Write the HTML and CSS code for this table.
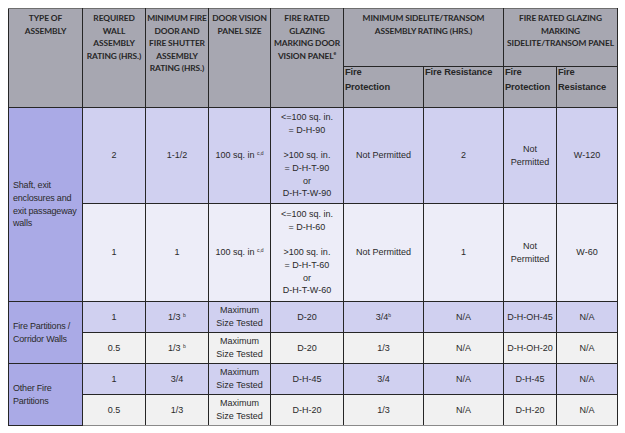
FILE: index.html
```html
<!DOCTYPE html>
<html>
<head>
<meta charset="utf-8">
<link rel="stylesheet" href="styles.css">
</head>
<body>
<table class="fire-table">
  <colgroup>
    <col class="c1"><col class="c2"><col class="c3"><col class="c4"><col class="c5"><col class="c6"><col class="c7"><col class="c8"><col class="c9">
  </colgroup>
  <thead>
    <tr class="h1">
      <th rowspan="2">TYPE OF<br>ASSEMBLY</th>
      <th rowspan="2">REQUIRED<br>WALL<br>ASSEMBLY<br>RATING (HRS.)</th>
      <th rowspan="2">MINIMUM FIRE<br>DOOR AND<br>FIRE SHUTTER<br>ASSEMBLY<br>RATING (HRS.)</th>
      <th rowspan="2">DOOR VISION<br>PANEL SIZE</th>
      <th rowspan="2">FIRE RATED<br>GLAZING<br>MARKING DOOR<br>VISION PANEL<sup>e</sup></th>
      <th colspan="2">MINIMUM SIDELITE/TRANSOM<br>ASSEMBLY RATING (HRS.)</th>
      <th colspan="2">FIRE RATED GLAZING<br>MARKING<br>SIDELITE/TRANSOM PANEL</th>
    </tr>
    <tr class="h2">
      <th class="sub"><span class="sub-t">Fire<br>Protection</span></th>
      <th class="sub"><span class="sub-t">Fire Resistance</span></th>
      <th class="sub"><span class="sub-t">Fire<br>Protection</span></th>
      <th class="sub"><span class="sub-t">Fire<br>Resistance</span></th>
    </tr>
  </thead>
  <tbody>
    <tr class="odd big">
      <td class="type" rowspan="2">Shaft, exit enclosures and exit passageway walls</td>
      <td>2</td>
      <td>1-1/2</td>
      <td>100 sq. in <sup>c,d</sup></td>
      <td>&lt;=100 sq. in.<br>= D-H-90<br><br>&gt;100 sq. in.<br>= D-H-T-90<br>or<br>D-H-T-W-90</td>
      <td>Not Permitted</td>
      <td>2</td>
      <td>Not<br>Permitted</td>
      <td>W-120</td>
    </tr>
    <tr class="even-l big">
      <td>1</td>
      <td>1</td>
      <td>100 sq. in <sup>c,d</sup></td>
      <td>&lt;=100 sq. in.<br>= D-H-60<br><br>&gt;100 sq. in.<br>= D-H-T-60<br>or<br>D-H-T-W-60</td>
      <td>Not Permitted</td>
      <td>1</td>
      <td>Not<br>Permitted</td>
      <td>W-60</td>
    </tr>
    <tr class="odd small">
      <td class="type" rowspan="2">Fire Partitions / Corridor Walls</td>
      <td>1</td>
      <td>1/3 <sup>b</sup></td>
      <td>Maximum<br>Size Tested</td>
      <td>D-20</td>
      <td>3/4<sup>b</sup></td>
      <td>N/A</td>
      <td>D-H-OH-45</td>
      <td>N/A</td>
    </tr>
    <tr class="even small">
      <td>0.5</td>
      <td>1/3 <sup>b</sup></td>
      <td>Maximum<br>Size Tested</td>
      <td>D-20</td>
      <td>1/3</td>
      <td>N/A</td>
      <td>D-H-OH-20</td>
      <td>N/A</td>
    </tr>
    <tr class="odd small">
      <td class="type" rowspan="2">Other Fire Partitions</td>
      <td>1</td>
      <td>3/4</td>
      <td>Maximum<br>Size Tested</td>
      <td>D-H-45</td>
      <td>3/4</td>
      <td>N/A</td>
      <td>D-H-45</td>
      <td>N/A</td>
    </tr>
    <tr class="even small last">
      <td>0.5</td>
      <td>1/3</td>
      <td>Maximum<br>Size Tested</td>
      <td>D-H-20</td>
      <td>1/3</td>
      <td>N/A</td>
      <td>D-H-20</td>
      <td>N/A</td>
    </tr>
  </tbody>
</table>
</body>
</html>
```

FILE: styles.css
```css
html, body {
  margin: 0;
  padding: 0;
  background: #ffffff;
}

body {
  padding: 8px;
}

.fire-table {
  table-layout: fixed;
  border-collapse: collapse;
  width: 609px;
  font-family: "Liberation Sans", Arial, sans-serif;
  color: #2a2a2a;
}

.c1 { width: 74px; }
.c2 { width: 63px; }
.c3 { width: 63px; }
.c4 { width: 62px; }
.c5 { width: 73px; }
.c6 { width: 80px; }
.c7 { width: 80px; }
.c8 { width: 53px; }
.c9 { width: 61px; }

.fire-table th,
.fire-table td {
  border: 1.5px solid #262626;
  padding: 0;
}

.fire-table thead tr.h1 th {
  border-top-color: #6e6e6e;
}

.fire-table th {
  background: #a7a7b1;
  font-family: Lato, "Open Sans", sans-serif;
  font-weight: bold;
  font-size: 8.4px;
  line-height: 12.6px;
  letter-spacing: -0.1px;
  color: #262626;
  text-align: center;
  vertical-align: top;
  padding-top: 3px;
  white-space: nowrap;
}

.fire-table th sup {
  font-size: 5px;
  line-height: 0;
}

tr.h1 { height: 58px; }
tr.h2 { height: 41px; }

.fire-table th.sub {
  font-family: "Liberation Sans", Arial, sans-serif;
  font-size: 9.3px;
  letter-spacing: -0.1px;
  text-align: left;
  padding: 0 0 0 1px;
}

.sub-t {
  display: block;
  line-height: 15.5px;
  margin-top: -2.5px;
}

.fire-table td {
  font-size: 9px;
  line-height: 12.7px;
  letter-spacing: 0;
  text-align: center;
  vertical-align: middle;
}

.fire-table td sup {
  font-size: 5px;
  line-height: 0;
  vertical-align: 3px;
}

.fire-table td.type {
  background: #aaaae6;
  text-align: left;
  padding-left: 4px;
  padding-right: 0;
  letter-spacing: -0.2px;
}

tr.big { height: 96px; }
tr.big + tr.big { height: 98px; }
tr.small { height: 31px; }

tr.odd td { background: #d0d0f0; }
tr.even-l td { background: #ededf8; }
tr.even td { background: #f1f1f1; }

tr.odd td.type,
tr.even td.type { background: #aaaae6; }

tr.last td {
  border-bottom: 1px solid #8a8a8a;
}
```
